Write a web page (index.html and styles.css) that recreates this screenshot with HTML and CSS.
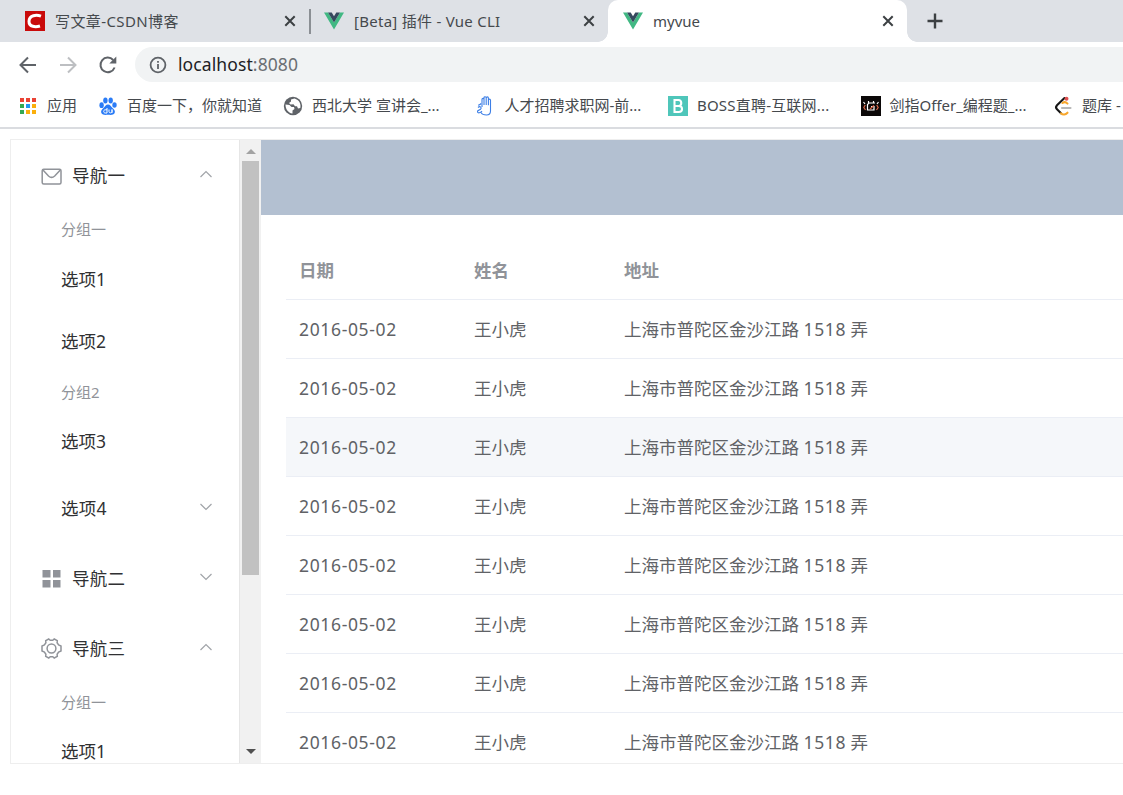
FILE: index.html
```html
<!DOCTYPE html>
<html lang="zh-CN">
<head>
    <meta charset="UTF-8">
    <meta name="viewport" content="width=device-width, initial-scale=1.0">
    <title>myvue</title>
    <link rel="stylesheet" href="styles.css">
</head>
<body>
    <header class="browser">
        <div class="tabs">
            <div class="tab">
                <svg class="favicon" viewBox="0 0 20 20"><rect width="20" height="20" fill="#c90a0a"/><path d="M16 5.200C11.500 3.600 4.200 4 4 10.200c-.1 5.800 6.500 6.200 11 4.800" fill="none" stroke="#fff" stroke-width="3"/></svg>
                <span class="tab-title csdn">写文章-CSDN博客</span>
                <svg class="close" viewBox="0 0 12 12"><path d="M1.300 1.300l9.400 9.400M10.700 1.300l-9.400 9.400"/></svg>
            </div>
            <div class="tab divided">
                <svg class="favicon" viewBox="0 0 20 20"><path d="M0 1.500h4l6 10 6-10h4l-10 17z" fill="#41b883"/><path d="M4 1.500h3.700L10 5.300l2.300-3.800H16l-6 10z" fill="#35495e"/></svg>
                <span class="tab-title beta">[Beta] 插件 - Vue CLI</span>
                <svg class="close" viewBox="0 0 12 12"><path d="M1.300 1.300l9.400 9.400M10.700 1.300l-9.400 9.400"/></svg>
            </div>
            <div class="tab active">
                <svg class="favicon" viewBox="0 0 20 20"><path d="M0 1.500h4l6 10 6-10h4l-10 17z" fill="#41b883"/><path d="M4 1.500h3.700L10 5.300l2.300-3.800H16l-6 10z" fill="#35495e"/></svg>
                <span class="tab-title">myvue</span>
                <svg class="close" viewBox="0 0 12 12"><path d="M1.300 1.300l9.400 9.400M10.700 1.300l-9.400 9.400"/></svg>
            </div>
            <svg class="new-tab" viewBox="0 0 16 16"><path d="M8 .5v15M.5 8h15"/></svg>
        </div>
        <div class="toolbar">
            <svg class="tool" viewBox="0 0 20 20"><path d="M18 10H3M10 2.500L2.500 10l7.500 7.500"/></svg>
            <svg class="tool disabled" viewBox="0 0 20 20"><path d="M2 10h15M10 2.500l7.500 7.500-7.500 7.500"/></svg>
            <svg class="tool" viewBox="0 0 20 20"><path d="M16.600 12.500A7.300 7.300 0 1 1 15.200 5"/><path d="M18.300 1.500v7h-7z" class="solid"/></svg>
            <div class="address">
                <svg class="info" viewBox="0 0 18 18"><circle cx="9" cy="9" r="7.400"/><path d="M9 8v5M9 5v1.800"/></svg>
                <span class="url">localhost<span>:8080</span></span>
            </div>
        </div>
        <div class="bookmarks">
            <a class="bookmark apps">
                <svg viewBox="0 0 20 20"><path d="M2 2h4v4H2zM8 2h4v4H8zM14 2h4v4h-4z" fill="#ea4335"/><path d="M2 8h4v4H2zM2 14h4v4H2z" fill="#34a853"/><path d="M8 8h4v4H8z" fill="#2196f3"/><path d="M14 8h4v4h-4zM8 14h4v4H8zM14 14h4v4h-4z" fill="#fbaf0c"/></svg>
                <span>应用</span>
            </a>
            <a class="bookmark baidu">
                <svg viewBox="0 0 20 20" fill="#2b7cf6"><ellipse cx="3.600" cy="9.200" rx="2.200" ry="2.900"/><ellipse cx="7.400" cy="4.400" rx="2.200" ry="3"/><ellipse cx="12.700" cy="4.400" rx="2.200" ry="3"/><ellipse cx="16.500" cy="9" rx="2.200" ry="2.800"/><path d="M10 8.500c2.200 0 3 2.200 4.800 3.800 1.900 1.700 2.700 3.200 1.700 5-1 1.900-3.500 1.600-6.500 1.500-3 .1-5.500.4-6.500-1.500-1-1.800-.2-3.300 1.700-5C7 10.700 7.800 8.500 10 8.500z"/><path d="M9 12v5H7.200c-2 0-2-3.200 0-3.200H9M11 13.500v2.300c0 1.400 3 1.400 3 0v-2.300V17" fill="none" stroke="#fff" stroke-width="1"/></svg>
                <span>百度一下，你就知道</span>
            </a>
            <a class="bookmark">
                <svg viewBox="0 0 20 20"><circle cx="10" cy="10" r="9.200" fill="#5f6368"/><path d="M2.500 8.500l4 .5 2 2h2.500l.5 2-2 1.500v3c-4.500-.5-7-4.500-7-9zM11.500 2.500L8 3.500v2l-2 1.500 1.500 1.500 3-.3 1.500 2h2l1 2.300 2.300-.5c1-4-1-8-5.800-9.500z" fill="#fff"/></svg>
                <span>西北大学 宣讲会_...</span>
            </a>
            <a class="bookmark">
                <svg viewBox="0 0 20 20" fill="none" stroke="#3d7fe6" stroke-width="1.100"><path d="M6 11V3.500c0-1.500 2-1.500 2 0V9 1.800c0-1.500 2.200-1.500 2.200 0V9 2c0-1.500 2.200-1.500 2.200 0v7.200-5c0-1.500 2.100-1.500 2.100 0V15c0 2.500-1.500 4-4 4-2.800 0-4.500-.6-5.500-2.500"/><path d="M5.300 7.500c-1 1-2 1.500-3.200 1.700M2 11.500c2-2 4.300.2 2.500 1.800-2 1.500-3.300 1-3 2.500s3 1.500 4.500-.8"/></svg>
                <span>人才招聘求职网-前...</span>
            </a>
            <a class="bookmark boss">
                <svg viewBox="0 0 20 20"><rect width="20" height="20" fill="#4fc6ba"/><path d="M6.500 4v12h4.300c4.300 0 4.300-6 0-6H6.500h4c3.700 0 3.700-6 0-6z" fill="none" stroke="#fff" stroke-width="2.100"/></svg>
                <span>BOSS直聘-互联网...</span>
            </a>
            <a class="bookmark offer">
                <svg viewBox="0 0 20 20"><rect width="20" height="20" fill="#0b0808"/><g fill="none" stroke-width="1.200"><path d="M14 7H8L6.500 8.500V14H13v-3.500h-3M7.500 5v2M12.500 5v2M2.500 6l1.500 2M17.500 6L16 8" stroke="#fff"/><path d="M4.300 9L2.800 11.500 4.500 14M15.700 9l1.500 2.500-1.700 2.500M9 13l4-3.500" stroke="#dd6748"/></g></svg>
                <span>剑指Offer_编程题_...</span>
            </a>
            <a class="bookmark">
                <svg viewBox="0 0 20 20" fill="none" stroke-width="2.100" stroke-linecap="round"><path d="M11.500 2L4 9.300c-1.300 1.400-1.300 2.700 0 4l4 4" stroke="#161616"/><path d="M8 17.300c2 2 4.500 1.500 6.500-.6M9.500 7c2-1.500 3.500-1 5 .6" stroke="#f8a72c"/><path d="M9 12h8.500" stroke="#b8b8b8"/><circle cx="13.500" cy="2.700" r="2" fill="#df5050"/></svg>
                <span>题库 -</span>
            </a>
        </div>
    </header>

    <div class="el-container">
        <aside class="el-aside">
            <ul class="el-menu">
                <li class="submenu-title first">
                    <svg class="menu-icon" viewBox="0 0 22 22"><rect x="1.200" y="4.200" width="18.800" height="14.800" rx="1.500"/><path d="M2 5l5.500 6c2.200 2 4 2 6.200 0L19.300 5"/></svg>
                    <span>导航一</span>
                    <svg class="arrow" viewBox="0 0 14 8"><path d="M1.500 7L7 1.500 12.500 7"/></svg>
                </li>
                <li class="group-title">分组一</li>
                <li class="menu-item">选项1</li>
                <li class="menu-item">选项2</li>
                <li class="group-title">分组2</li>
                <li class="menu-item">选项3</li>
                <li class="submenu-title nested">
                    <span>选项4</span>
                    <svg class="arrow" viewBox="0 0 14 8"><path d="M1.500 1L7 6.500 12.500 1"/></svg>
                </li>
                <li class="submenu-title">
                    <svg class="menu-icon filled" viewBox="0 0 22 22"><path d="M1.500 3h8v7.500h-8zM12 3h7.500v7.500H12zM1.500 13h8v7.500h-8zM12 13h7.500v7.500H12z"/></svg>
                    <span>导航二</span>
                    <svg class="arrow" viewBox="0 0 14 8"><path d="M1.500 1L7 6.500 12.500 1"/></svg>
                </li>
                <li class="submenu-title">
                    <svg class="menu-icon" viewBox="0 0 22 22"><circle cx="10.500" cy="11.500" r="4.400"/><path d="M7.800 2l1.400 1.200h2.600L13.200 2l3.100 1.700-.2 2 1.500 2.300 2.400 1v5l-2.400 1-1.500 2.300.2 2-3.100 1.700-1.400-1.200H9.200L7.800 21l-3.100-1.700.2-2L3.400 15 1 14V9l2.400-1 1.500-2.300-.2-2z"/></svg>
                    <span>导航三</span>
                    <svg class="arrow" viewBox="0 0 14 8"><path d="M1.500 7L7 1.500 12.500 7"/></svg>
                </li>
                <li class="group-title">分组一</li>
                <li class="menu-item">选项1</li>
            </ul>
            <div class="scrollbar">
                <svg viewBox="0 0 10 5"><path d="M0 5l5-5 5 5z" fill="#a3a3a3"/></svg>
                <div class="thumb"></div>
                <svg class="down" viewBox="0 0 10 5"><path d="M0 0l5 5 5-5z" fill="#505050"/></svg>
            </div>
        </aside>

        <section class="content">
            <div class="el-header"></div>
            <main class="el-main">
                <table>
                    <colgroup>
                        <col class="col-date">
                        <col class="col-name">
                        <col>
                    </colgroup>
                    <thead>
                        <tr><th>日期</th><th>姓名</th><th>地址</th></tr>
                    </thead>
                    <tbody>
                        <tr><td class="date">2016-05-02</td><td>王小虎</td><td>上海市普陀区金沙江路 <span>1518</span> 弄</td></tr>
                        <tr><td class="date">2016-05-02</td><td>王小虎</td><td>上海市普陀区金沙江路 <span>1518</span> 弄</td></tr>
                        <tr class="hover"><td class="date">2016-05-02</td><td>王小虎</td><td>上海市普陀区金沙江路 <span>1518</span> 弄</td></tr>
                        <tr><td class="date">2016-05-02</td><td>王小虎</td><td>上海市普陀区金沙江路 <span>1518</span> 弄</td></tr>
                        <tr><td class="date">2016-05-02</td><td>王小虎</td><td>上海市普陀区金沙江路 <span>1518</span> 弄</td></tr>
                        <tr><td class="date">2016-05-02</td><td>王小虎</td><td>上海市普陀区金沙江路 <span>1518</span> 弄</td></tr>
                        <tr><td class="date">2016-05-02</td><td>王小虎</td><td>上海市普陀区金沙江路 <span>1518</span> 弄</td></tr>
                        <tr><td class="date">2016-05-02</td><td>王小虎</td><td>上海市普陀区金沙江路 <span>1518</span> 弄</td></tr>
                    </tbody>
                </table>
            </main>
        </section>
    </div>
</body>
</html>
```
FILE: styles.css
```css
* {
    box-sizing: border-box;
}
body {
    margin: 0;
    height: 795px;
    overflow: hidden;
    background-color: #fff;
    font-family: "Noto Sans", "Noto Sans CJK SC", sans-serif;
    font-size: 17.5px;
    color: #303133;
}
svg {
    display: block;
    flex: none;
}
.browser {
    height: 129px;
    border-bottom: 2px solid #dadce0;
    overflow: hidden;
}
.tabs {
    display: flex;
    align-items: center;
    height: 42px;
    padding-left: 10px;
    background-color: #dee1e6;
}
.tab {
    position: relative;
    display: flex;
    align-items: center;
    flex: none;
    width: 299px;
    height: 42px;
    padding: 0 13px 0 15px;
    font-size: 15px;
    color: #45494d;
    white-space: nowrap;
}
.tab-title.csdn {
    padding-bottom: 2px;
    letter-spacing: 0.4px;
}
.tab-title.beta {
    padding-bottom: 2px;
    letter-spacing: 0.27px;
}
.tab.divided::before {
    content: "";
    position: absolute;
    left: 0;
    top: 9px;
    width: 2px;
    height: 25px;
    background-color: #8b8f94;
}
.tab.active {
    background-color: #fff;
    border-radius: 10px 10px 0 0;
}
/* curved feet of the active tab */
.tab.active::before,
.tab.active::after {
    content: "";
    position: absolute;
    bottom: 0;
    width: 10px;
    height: 10px;
}
.tab.active::before {
    left: -10px;
    background: radial-gradient(circle at 0 0, transparent 9.5px, #fff 10px);
}
.tab.active::after {
    right: -10px;
    background: radial-gradient(circle at 100% 0, transparent 9.5px, #fff 10px);
}
.favicon {
    width: 20px;
    height: 20px;
    margin-right: 10px;
}
.close {
    width: 12px;
    height: 12px;
    margin-left: auto;
    fill: none;
    stroke: #3c4043;
    stroke-width: 2;
}
.new-tab {
    width: 16px;
    height: 16px;
    margin-left: 20px;
    fill: none;
    stroke: #3c4043;
    stroke-width: 2.4;
}
.toolbar {
    display: flex;
    align-items: center;
    height: 45px;
    padding-left: 18px;
}
.tool {
    width: 20px;
    height: 20px;
    margin-right: 20px;
    fill: none;
    stroke: #5f6368;
    stroke-width: 2;
}
.tool.disabled {
    stroke: #bdbfc2;
}
.tool .solid {
    fill: #5f6368;
    stroke: none;
}
.address {
    display: flex;
    align-items: center;
    flex: 1;
    height: 35px;
    margin-left: -3px;
    padding-left: 14px;
    background-color: #f1f3f4;
    border-radius: 18px 0 0 18px;
}
.info {
    width: 18px;
    height: 18px;
    margin-right: 11px;
    fill: none;
    stroke: #5f6368;
    stroke-width: 1.8;
}
.url {
    padding-bottom: 2px;
    font-size: 17.5px;
    letter-spacing: 0.1px;
    color: #202124;
}
.url span {
    color: #6b6f73;
}
.bookmarks {
    display: flex;
    align-items: center;
    height: 37px;
    padding-left: 18px;
}
.bookmark {
    display: flex;
    align-items: center;
    flex: none;
    width: 192.5px;
    font-size: 15px;
    line-height: 20px;
    color: #45494d;
    white-space: nowrap;
}
.bookmark svg {
    width: 20px;
    height: 20px;
    margin-right: 9px;
}
.bookmark span {
    padding-bottom: 2px;
}
.bookmark.apps {
    width: 80px;
}
.bookmark.baidu {
    width: 185px;
}
.bookmark.boss span {
    letter-spacing: 0.2px;
}
.el-container {
    display: flex;
    height: 625px;
    margin: 10px 0 0 10px;
    border: 1px solid #eee;
    border-right: none;
    overflow: hidden;
}
.el-aside {
    display: flex;
    flex: none;
    width: 250px;
    height: 623px;
    overflow: hidden;
}
.el-menu {
    width: 229px;
    margin: 0;
    padding: 0;
    list-style: none;
    border-right: 1px solid #e6e6e6;
}
.submenu-title {
    display: flex;
    align-items: center;
    height: 70px;
    padding: 0 25px 0 30px;
}
.submenu-title span {
    letter-spacing: 0.3px;
}
.submenu-title.first span {
    padding-bottom: 2px;
}
.submenu-title.nested {
    padding-left: 50px;
}
.menu-icon {
    width: 22px;
    height: 22px;
    margin: 1px 9px 0 0;
    fill: none;
    stroke: #909399;
    stroke-width: 1.5;
}
.menu-icon.filled {
    fill: #909399;
    stroke: none;
}
.arrow {
    width: 14px;
    height: 8px;
    margin: 0 1px 2px auto;
    fill: none;
    stroke: #a1a4a9;
    stroke-width: 1.2;
}
.group-title {
    height: 37.5px;
    padding-left: 50px;
    font-size: 15px;
    line-height: 38px;
    color: #909399;
}
.menu-item {
    height: 62.5px;
    padding-left: 50px;
    line-height: 62.5px;
}
.scrollbar {
    display: flex;
    flex-direction: column;
    align-items: center;
    width: 21px;
    height: 623px;
    padding: 9px 0;
    background-color: #f1f1f1;
}
.scrollbar svg {
    width: 10px;
    height: 5px;
}
.thumb {
    width: 17px;
    height: 414px;
    margin-top: 7px;
    background-color: #c1c1c1;
}
.scrollbar .down {
    margin-top: auto;
}
.content {
    flex: 1;
}
.el-header {
    height: 75px;
    background-color: #b3c0d1;
}
.el-main {
    padding: 25px 0 0 25px;
}
table {
    width: 100%;
    table-layout: fixed;
    border-collapse: separate;
    border-spacing: 0;
    color: #606266;
}
.col-date {
    width: 175px;
}
.col-name {
    width: 150px;
}
th, td {
    height: 59px;
    padding: 0 0 0 13px;
    text-align: left;
    border-bottom: 1px solid #ebeef5;
    white-space: nowrap;
}
td {
    padding-bottom: 2px;
}
td.date {
    padding-bottom: 0;
    letter-spacing: 0.65px;
}
td span {
    letter-spacing: 0.6px;
}
th {
    height: 60px;
    color: #909399;
    font-weight: bold;
}
.hover td {
    background-color: #f5f7fa;
}
```
